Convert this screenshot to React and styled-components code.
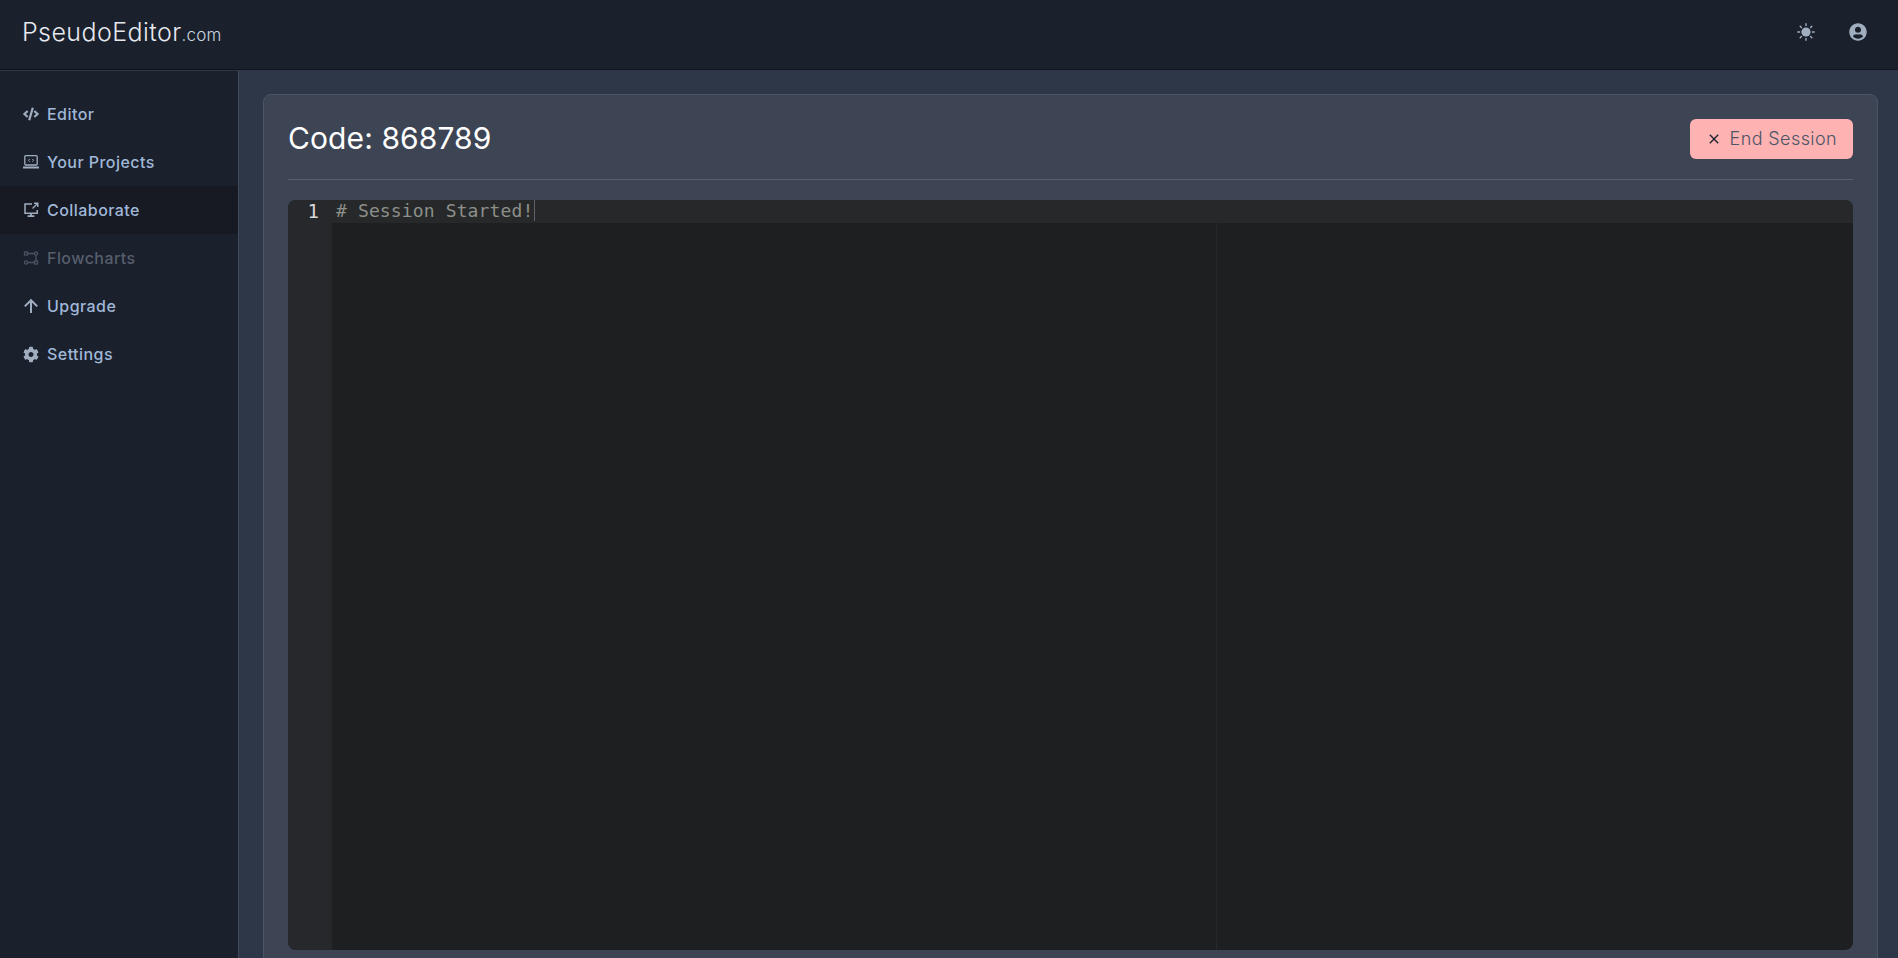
import React from 'react'
import styled, { createGlobalStyle } from 'styled-components'
import { FaCode, FaCog, FaUserCircle } from 'react-icons/fa'
import { MdClose } from 'react-icons/md'

const GlobalStyle = createGlobalStyle`
  html, body {
    margin: 0;
    height: 100%;
    overflow: hidden;
    background: #2d3748;
    font-family: "Inter", "Open Sans", sans-serif;
  }
  * { box-sizing: border-box; }
`

const LaptopIcon = () => (
  <svg viewBox="0 0 16 16" width="16" height="16" fill="none" stroke="currentColor">
    <rect x="1.8" y="1.6" width="12.4" height="9.4" rx="1" strokeWidth="1.3" />
    <path d="M0.5 13.6h15" strokeWidth="2" strokeLinecap="round" />
    <path d="M6.8 4.9 5.4 6.3l1.4 1.4M9.2 4.9l1.4 1.4-1.4 1.4" strokeWidth="1" />
  </svg>
)

const ShareIcon = () => (
  <svg viewBox="0 0 16 16" width="16" height="16" fill="none" stroke="currentColor" strokeWidth="1.5">
    <path d="M9 2H2v9.2h12.2V8" />
    <path d="M8 11.2v2.6M4.6 14.2h6.8" strokeWidth="1.8" />
    <path d="M9.5 6.5 14.5 1.5M11 1.2h3.8V5" strokeWidth="1.4" />
  </svg>
)

const FlowIcon = () => (
  <svg viewBox="0 0 16 16" width="16" height="16" fill="none" stroke="currentColor" strokeWidth="1.3">
    <rect x="1.5" y="2" width="3" height="3" />
    <circle cx="13" cy="3.5" r="1.6" />
    <circle cx="3" cy="12.5" r="1.6" />
    <rect x="11.5" y="11" width="3" height="3" />
    <path d="M4.5 3.5h7M13 5v6M4.6 12.5h6.9" />
  </svg>
)

const UpIcon = () => (
  <svg viewBox="0 0 16 16" width="16" height="16" fill="none" stroke="currentColor" strokeWidth="2">
    <path d="M8 15V2.5M1.8 8.4 8 2.2l6.2 6.2" />
  </svg>
)

const SunIcon = () => (
  <svg viewBox="0 0 18 18" width="18" height="18" fill="none" stroke="currentColor" strokeWidth="1.4" strokeLinecap="round">
    <circle cx="9" cy="9" r="4.6" fill="currentColor" stroke="none" />
    <path d="M9 .8v1.8M9 15.4v1.8M.8 9h1.8M15.4 9h1.8M3.2 3.2l1.2 1.2M13.6 13.6l1.2 1.2M3.2 14.8l1.2-1.2M13.6 4.4l1.2-1.2" />
  </svg>
)

const navItems = [
  { label: 'Editor', icon: <FaCode size={16} /> },
  { label: 'Your Projects', icon: <LaptopIcon /> },
  { label: 'Collaborate', icon: <ShareIcon />, active: true },
  { label: 'Flowcharts', icon: <FlowIcon />, disabled: true },
  { label: 'Upgrade', icon: <UpIcon /> },
  { label: 'Settings', icon: <FaCog size={17} /> },
]

const App = () => {
  return (
    <Page>
      <GlobalStyle />
      <Header>
        <Logo>PseudoEditor<small>.com</small></Logo>
        <HeaderIcons>
          <SunIcon />
          <FaUserCircle size={18} />
        </HeaderIcons>
      </Header>
      <Body>
        <Sidebar>
          {navItems.map((item) => (
            <NavItem key={item.label} $active={item.active} $disabled={item.disabled}>
              <NavIcon $disabled={item.disabled}>{item.icon}</NavIcon>
              {item.label}
            </NavItem>
          ))}
        </Sidebar>
        <Main>
          <Card>
            <CardHead>
              <Title>Code: 868789</Title>
              <EndButton>
                <MdClose size={16} />
                End Session
              </EndButton>
            </CardHead>
            <Editor>
              <Gutter>
                <LineNumber>1</LineNumber>
              </Gutter>
              <CodeArea>
                <ActiveLine>
                  # Session Started!<Caret />
                </ActiveLine>
                <PrintMargin />
              </CodeArea>
            </Editor>
          </Card>
        </Main>
      </Body>
    </Page>
  )
}

export default App

const Page = styled.div`
  display: flex;
  flex-direction: column;
  height: 958px;
  overflow: hidden;
`

const Header = styled.header`
  display: flex;
  flex: 0 0 70px;
  align-items: center;
  justify-content: space-between;
  padding: 0 31px 6px 22px;
  background: #1a202c;
  border-bottom: 1px solid #11141b;
`

const Logo = styled.div`
  color: #e6e9ee;
  font-size: 25px;
  font-weight: 300;
  letter-spacing: 0.42px;
  small {
    color: #cbd5e0;
    font-size: 17px;
    letter-spacing: 0.2px;
  }
`

const HeaderIcons = styled.div`
  display: flex;
  align-items: center;
  gap: 34px;
  color: #a0aec0;
`

const Body = styled.div`
  display: flex;
  flex: 1;
  min-height: 0;
`

const Sidebar = styled.nav`
  flex: 0 0 239px;
  padding-top: 19px;
  background: #1a202c;
  border-right: 1px solid #414a5b;
  border-top: 1px solid #2d3748;
`

const NavItem = styled.div`
  display: flex;
  align-items: center;
  gap: 8px;
  height: 48px;
  padding-left: 23px;
  font-size: 16px;
  font-weight: 500;
  letter-spacing: 0.45px;
  color: ${(p) => (p.$disabled ? '#565e6c' : '#a0b8d8')};
  background: ${(p) => (p.$active ? '#171923' : 'transparent')};
`

const NavIcon = styled.span`
  display: flex;
  align-items: center;
  justify-content: center;
  width: 16px;
  color: ${(p) => (p.$disabled ? '#4a5361' : '#a0aec0')};
`

const Main = styled.main`
  flex: 1;
  min-width: 0;
  padding: 24px 20px 0 24px;
  background: #2d3748;
`

const Card = styled.section`
  height: 900px;
  padding: 24px;
  background: #3d4454;
  border: 1px solid #4a5568;
  border-radius: 8px;
`

const CardHead = styled.div`
  display: flex;
  align-items: center;
  justify-content: space-between;
  height: 61px;
  padding-bottom: 21px;
  border-bottom: 1px solid #555d6e;
`

const Title = styled.h1`
  margin: 0 0 2px;
  color: #fff;
  font-size: 30px;
  font-weight: 400;
  letter-spacing: 0.1px;
`

const EndButton = styled.button`
  display: flex;
  align-items: center;
  gap: 8px;
  height: 40px;
  padding: 0 16px;
  border: none;
  border-radius: 6px;
  background: #feb2b2;
  color: #4a5568;
  font-family: inherit;
  font-size: 18px;
  font-weight: 300;
  letter-spacing: 0.4px;
  svg { color: #1a202c; }
`

const Editor = styled.div`
  display: flex;
  height: 750px;
  margin-top: 20px;
  overflow: hidden;
  border-radius: 8px;
  background: #1e1f21;
  font-family: "DejaVu Sans Mono", "Liberation Mono", monospace;
  font-size: 18px;
`

const Gutter = styled.div`
  flex: 0 0 44px;
  background: #26282c;
`

const LineNumber = styled.div`
  height: 23px;
  padding-right: 13px;
  line-height: 22px;
  text-align: right;
  font-size: 19px;
  color: #d8d8d8;
`

const CodeArea = styled.div`
  position: relative;
  flex: 1;
`

const ActiveLine = styled.div`
  height: 23px;
  padding-left: 4px;
  line-height: 22px;
  letter-spacing: 0.13px;
  background: #26282a;
  color: #8c9089;
  white-space: pre;
`

const Caret = styled.span`
  display: inline-block;
  width: 1px;
  height: 21px;
  margin-left: 1px;
  vertical-align: top;
  background: #5f6266;
`

const PrintMargin = styled.div`
  position: absolute;
  top: 0;
  bottom: 0;
  left: 884px;
  width: 1px;
  background: #26282b;
`
